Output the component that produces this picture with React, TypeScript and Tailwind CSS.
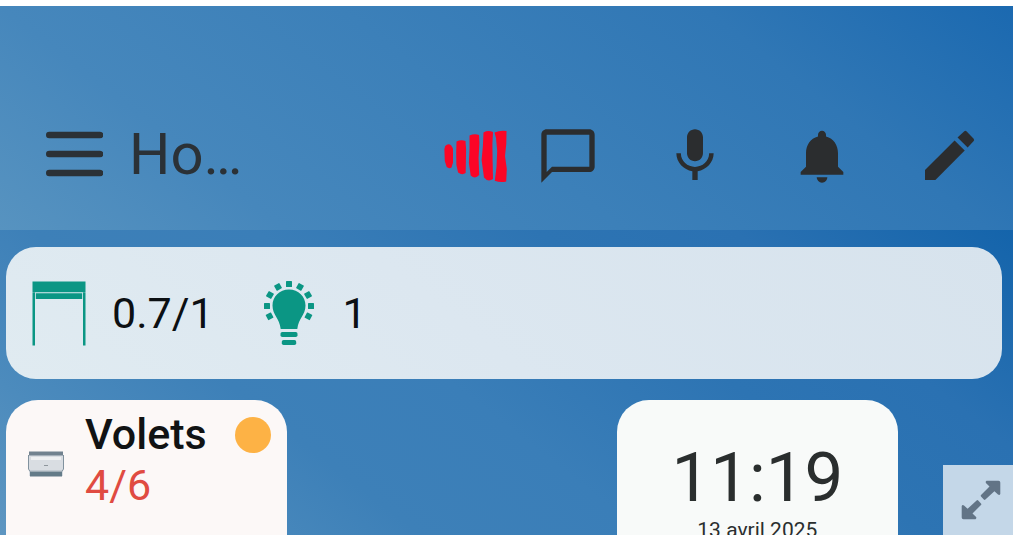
import React from "react";
import { MdChatBubbleOutline, MdMic, MdNotifications } from "react-icons/md";

function MenuIcon() {
  return (
    <svg viewBox="0 0 58 46" className="h-[46px] w-[58px]" aria-hidden="true">
      <g stroke="currentColor" strokeWidth="6.6" strokeLinecap="round">
        <path d="M4.300 4H55M4.300 23H55M4.300 42H55" />
      </g>
    </svg>
  );
}

function SignalBars() {
  return (
    <svg viewBox="0 0 64 54" className="h-[54px] w-16 text-[#fb0526]" fill="currentColor" role="img" aria-label="Signal">
      <path d="M1.200 17q3-3 6-.5l1.800 3v14l-1.500 5q-2.500 1.500-4.800-.5L.8 32l-.4-12z" />
      <path d="M12.500 12.500q4.500-2 9-.5l.6 8.500-.3 17-.2 6.500q-3.500 2.500-7.500-.5L12.400 36l-.2-12z" />
      <path d="M25.500 6.500q5-2 9.500-.5l.4 8-.8 15 .6 17q-4 4.500-8.500.5L24.900 34l.6-14z" />
      <path d="M39.500 3.500q4.500-2.500 9.500-.5l-.6 12 .2 16 .4 19q-5 3.500-9-1.500L37.600 31l1.300-14z" />
      <path d="M50.500 3.500q5.500-2.500 12-1.500l-.2 12.500L61 27l1.800 13-.6 12.500q-6 1.500-11.400-.8L52.500 38 53.200 22l-1.200-13z" />
    </svg>
  );
}

function PencilIcon() {
  return (
    <svg viewBox="0 0 24 24" className="size-16" fill="currentColor" aria-hidden="true">
      <path d="M3 17.250V21h3.900L17.900 9.950 14.100 6.150z" />
      <path d="M15.200 5.050 17.750 2.700q.4-.35.8 0l2.700 2.800q.35.45 0 .85L19 8.850z" />
    </svg>
  );
}

function AwningIcon() {
  return (
    <svg viewBox="0 0 54 65" className="h-[65px] w-[54px] shrink-0" fill="#0b9684" role="img" aria-label="Store">
      <path d="M.5.500H53.500V11.300H.5zM3.800 12.300H50.200V18H3.800zM.5 11.500H3V64.500H.5zM51 11.500H53.500V64.500H51z" />
    </svg>
  );
}

function BulbIcon() {
  const rays = [-118, -90, -60, -30, 0, 30, 60, 90, 118];
  return (
    <svg viewBox="0 0 52 66" className="h-[66px] w-[52px] shrink-0" fill="#0b9684" role="img" aria-label="Lumière">
      {rays.map((angle) => (
        <rect key={angle} x="23" y="1" width="6" height="6" rx=".6" transform={`rotate(${angle} 26 26)`} />
      ))}
      <path d="M26 9.500C16.500 9.500 9.500 16.500 9.500 25.500c0 9.500 7 12.500 8.200 23.500h16.600c1.200-11 8.200-14 8.200-23.500 0-9-7-16-16.500-16z" />
      <rect x="17.500" y="52" width="17" height="5" rx="1.800" />
      <rect x="18.800" y="60" width="14.400" height="5" rx="1.800" />
    </svg>
  );
}

function ShutterIcon() {
  return (
    <svg viewBox="0 0 38 26" className="h-[26px] w-[38px] shrink-0" role="img" aria-label="Volet">
      <path d="M2 1H36V25H2z" fill="#d9dde2" />
      <path d="M2 .5H36V4.500H2z" fill="#71828f" />
      <path d="M3 20.500H35V25.500H3z" fill="#647b88" />
      <path d="M1.500 4V18L3 20.500M36.500 4V18L35 20.500" fill="none" stroke="#81929e" />
      <path d="M4 7.500H34" stroke="#eef0f2" strokeWidth="3" />
      <path d="M3 19.500H35" stroke="#c2cad1" />
      <path d="M17 14.500h4" stroke="#8e969c" />
    </svg>
  );
}

function ExpandIcon() {
  return (
    <svg viewBox="0 0 40 40" className="size-10" fill="#627486" aria-hidden="true">
      <path d="M25.500.8H37.500q1.800 0 1.800 1.800v11.500q-.8 1.500-2.300.4l-3.600-3.300-9 8.400q-.8.700-1.600 0l-2.800-3q-.7-.8 0-1.600l8.500-8.400-3.600-3.500q-.8-1.300.6-2.300z" />
      <path d="M14.500 39.200H2.500Q.7 39.200.7 37.400V25.900q.8-1.500 2.300-.4l3.600 3.300 9-8.400q.8-.7 1.600 0l2.800 3q.7.8 0 1.600l-8.500 8.400 3.600 3.500q.8 1.300-.6 2.300z" />
    </svg>
  );
}

export default function App() {
  return (
    <div className="h-screen overflow-hidden bg-white pt-1.5 pr-[17px] pb-[7px] font-[Roboto,sans-serif]">
      <div className="relative flex h-full flex-col overflow-hidden">
        <header className="flex items-center bg-[linear-gradient(38deg,#5793c0_0%,#4687bc_22%,#3c80b9_48%,#3077b5_76%,#1b69b0_100%)] pt-[118px] pr-8 pb-[42px] pl-[45px] text-[#2b3136]">
          <div className="flex min-w-0 flex-1 items-center gap-[26px] pb-1">
            <button type="button" aria-label="Menu">
              <MenuIcon />
            </button>
            <h1 className="text-[58px] leading-[60px] whitespace-nowrap">Ho…</h1>
          </div>
          <div className="mr-7">
            <SignalBars />
          </div>
          <nav className="flex gap-[63px] text-[#2b2d2f]" aria-label="Actions">
            <button type="button" aria-label="Messages">
              <MdChatBubbleOutline className="size-16" />
            </button>
            <button type="button" aria-label="Micro">
              <MdMic className="size-16" />
            </button>
            <button type="button" aria-label="Notifications">
              <MdNotifications className="size-16" />
            </button>
            <button type="button" aria-label="Modifier">
              <PencilIcon />
            </button>
          </nav>
        </header>

        <main className="min-h-0 flex-1 bg-[linear-gradient(38deg,#5e96c1_0%,#4c8bbd_14%,#3d80b8_30%,#3a7eb8_46%,#2d74b3_66%,#2a71b2_80%,#1464ab_100%)] pt-[17px] pr-[11px] pl-1.5">
          <section className="flex items-center rounded-[30px] bg-[linear-gradient(38deg,#e0ebf1,#dce7f0_45%,#d7e3ed)] py-[33px] pl-[26px] text-[43px] leading-[66px] text-[#0c1013]">
            <AwningIcon />
            <span className="ml-[26px]">0.7/1</span>
            <span className="ml-[49px]">
              <BulbIcon />
            </span>
            <span className="ml-7">1</span>
          </section>

          <div className="mt-[21px] mr-[104px] grid grid-cols-3 gap-6">
            <article className="flex h-[260px] items-start rounded-[32px] bg-[#fcf8f7] pt-[9px] pr-4 pl-[21px]">
              <div className="pt-[42px]">
                <ShutterIcon />
              </div>
              <div className="ml-5 flex-1 text-[43px] leading-[51px]">
                <h2 className="font-medium text-[#111314]">Volets</h2>
                <p className="text-[#e04b41]">4/6</p>
              </div>
              <span className="mt-2 size-9 rounded-full bg-[#fdb245]" />
            </article>
            <article className="col-start-3 h-[260px] rounded-[32px] bg-[#f8faf9] pt-11 text-center text-[#2a2e2e]">
              <p className="text-[69px] leading-[68px]">11:19</p>
              <p className="mt-1 text-[21px] leading-7">13 avril 2025</p>
            </article>
          </div>
        </main>

        <button
          type="button"
          aria-label="Agrandir"
          className="absolute right-0 bottom-0 flex size-[70px] items-center justify-center bg-[#c4d7e8] pl-1.5"
        >
          <ExpandIcon />
        </button>
      </div>
    </div>
  );
}
